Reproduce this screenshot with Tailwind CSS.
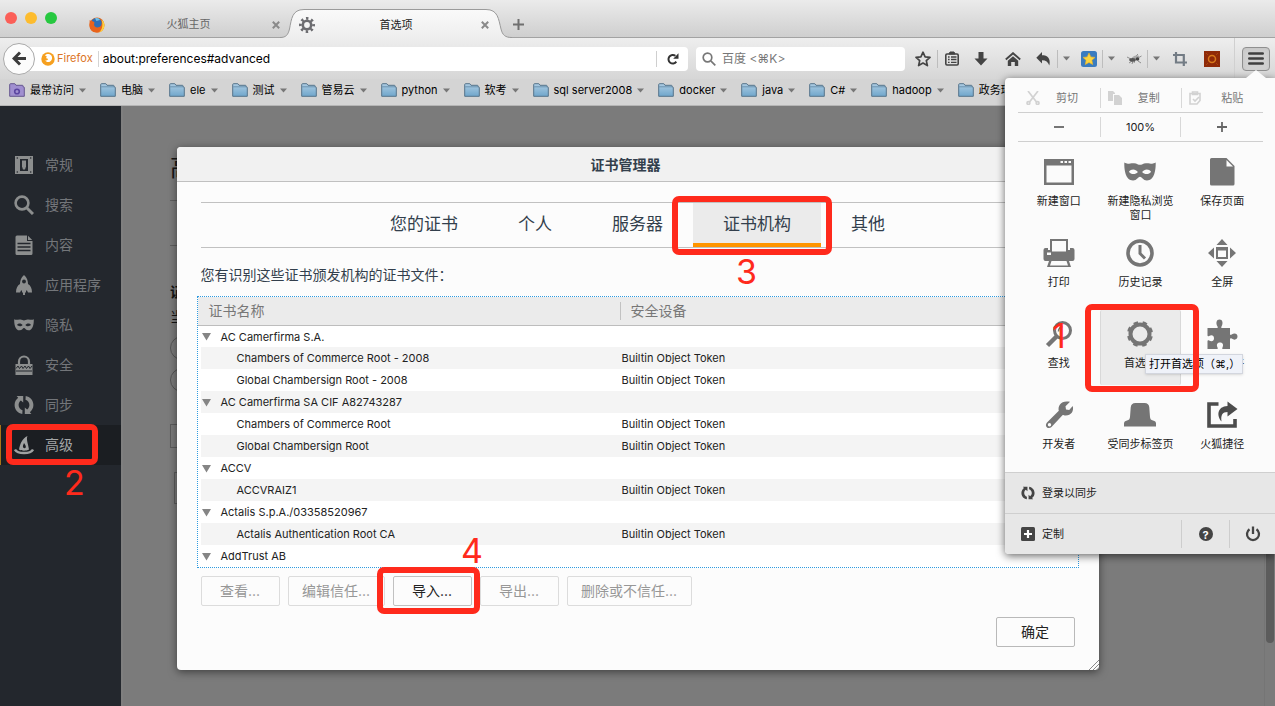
<!DOCTYPE html>
<html lang="zh-CN">
<head>
<meta charset="utf-8">
<title>首选项</title>
<script src="https://cdn.jsdelivr.net/npm/@tailwindcss/browser@4"></script>
</head>
<body class="relative flex h-screen flex-col overflow-hidden bg-[#7b7b7b] font-['Inter','Noto_Sans_CJK_SC',sans-serif] text-[11px] text-[#222]">

<svg class="absolute size-0" aria-hidden="true">
  <defs>
    <linearGradient id="fold" x1="0" y1="0" x2="0" y2="1"><stop offset="0" stop-color="#aecde4"/><stop offset="1" stop-color="#6fa6cb"/></linearGradient>
    <linearGradient id="tabfill" x1="0" y1="0" x2="0" y2="1"><stop offset="0" stop-color="#fafafa"/><stop offset="1" stop-color="#eeeeee"/></linearGradient>
  </defs>
  <symbol id="folder" viewBox="0 0 16 16"><path d="M.7 14.300V2.600q0-.9.9-.9h4.200l1.200 1.600h6.300q.8 0 .8.800v.8h.5q.7 0 .7.700v8.700z" fill="url(#fold)" stroke="#56738a" stroke-width="1"/><path d="M1.200 4.800h12.900" stroke="#5f86a3" stroke-width=".8"/></symbol>
  <symbol id="caret" viewBox="0 0 7 5"><path d="M0 .5h7L3.500 4.500z" fill="currentColor"/></symbol>
  <symbol id="mask" viewBox="0 0 30 20"><path fill="currentColor" fill-rule="evenodd" d="M.3 1.200C3.500 3.300 5.500 1.500 9.500 1.800c2.600.2 4 1.500 5.500 1.500s2.900-1.300 5.500-1.500c4-.3 6 1.500 9.200-.6C29.900 8 28.600 18 21.500 18c-3.600 0-4.800-3.500-6.500-3.500S12.100 18 8.500 18C1.400 18 .1 8 .3 1.200zM4.600 9.800c1.700 2.700 6.200 3 8.400.3-2-3.100-6.300-3.400-8.400-.3zm20.800 0c-2.100-3.100-6.400-2.800-8.400.3 2.200 2.700 6.700 2.400 8.400-.3z"/></symbol>
  <symbol id="sync" viewBox="0 0 20 20"><path fill="currentColor" d="M8.300 19C3.800 18.300.6 14.500.6 10c0-3 1.400-5.600 3.600-7.200L2.600 1h6.600v6.600L6.900 5.500C5.500 6.500 4.600 8.100 4.600 10c0 2.500 1.600 4.600 3.900 5.300zM11.700 1c4.500.7 7.700 4.500 7.700 9 0 3-1.400 5.600-3.600 7.200l1.600 1.800h-6.600v-6.600l2.300 2.100c1.400-1 2.300-2.600 2.300-4.500 0-2.500-1.600-4.600-3.900-5.300z"/></symbol>
</svg>

<!-- Tab strip -->
<header class="flex h-[38px] shrink-0 items-stretch border-b border-[#a3a3a3] bg-linear-to-b from-[#ebebeb] to-[#cfcfcf]">
  <div class="flex w-[84px] shrink-0 gap-2 pt-3 pl-[5px]">
    <button aria-label="关闭窗口" class="size-3 rounded-full bg-[#fb5f58]"></button>
    <button aria-label="最小化" class="size-3 rounded-full bg-[#fdbc2e]"></button>
    <button aria-label="全屏" class="size-3 rounded-full bg-[#27c840]"></button>
  </div>
  <div class="flex w-[200px] shrink-0 items-center pt-3 pl-[5px] text-[#666]">
    <svg class="size-4 shrink-0" viewBox="0 0 16 16"><circle cx="8" cy="8" r="7.500" fill="#e2661a"/><circle cx="7.400" cy="6.400" r="5.400" fill="#2f6fb5"/><path d="M6 1.300c2.500-.8 4.500.2 5 1.700-1.500 0-2.500 1-3.500 1z" fill="#6fc0e8"/><path d="M.7 3C1.500 4 3 3.700 4 4.500 5.500 4.700 6 6 5 7c0 3 2.500 4 5.500 3 2-1 2.600-3 2.300-5 2 1.500 2.700 3.500 2 6-1 3-3.800 4.500-7 4.500C3 15.500 0 12 .5 7z" fill="#e8631b"/><path d="M12.500 2.500c2.800 2 3.500 5 2.500 8.500-.8 2.300-2.600 4-5 4.400 3-2.500 4.500-7 2.500-12.900z" fill="#ffd23c"/></svg>
    <button class="flex-1 pl-1 text-center">火狐主页</button>
    <button aria-label="关闭标签页" class="grid size-4 place-items-center"><svg class="size-2" viewBox="0 0 8 8" stroke="#8a8a8a" stroke-width="2"><path d="M.8.8l6.400 6.400M7.200.8L.8 7.200"/></svg></button>
  </div>
  <div class="relative -mb-px -ml-1 flex w-[232px] shrink-0 items-center pt-3 pr-[19px] pl-[19px]">
    <svg class="absolute inset-x-0 top-[9px] h-[29px] w-full" viewBox="0 0 232 29" fill="none"><path d="M0 28.500C6 28.500 8 26 9.500 20C11.500 10 12 .5 24 .5H206C218 .5 218.500 10 221 20C222.500 26 225 28.500 232 28.500V29H0z" fill="url(#tabfill)"/><path d="M0 28.500C6 28.500 8 26 9.500 20C11.500 10 12 .5 24 .5H206C218 .5 218.500 10 221 20C222.500 26 225 28.500 232 28.500" stroke="#9a9a9a"/></svg>
    <svg class="relative size-4 shrink-0" viewBox="0 0 16 16" fill="none" stroke="#6c6c70"><circle cx="8" cy="8" r="4.200" stroke-width="2.600"/><circle cx="8" cy="8" r="6.600" stroke-width="2.800" stroke-dasharray="2.400 2.784" stroke-dashoffset="1.200"/></svg>
    <button class="relative flex-1 text-center">首选项</button>
    <button aria-label="关闭标签页" class="relative grid size-4 place-items-center"><svg class="size-2" viewBox="0 0 8 8" stroke="#8a8a8a" stroke-width="2"><path d="M.8.8l6.400 6.400M7.200.8L.8 7.200"/></svg></button>
  </div>
  <button aria-label="新建标签页" class="mt-3 grid w-3 place-items-center"><svg class="size-[11px]" viewBox="0 0 11 11" stroke="#6f6f6f" stroke-width="2"><path d="M5.500 0v11M0 5.500h11"/></svg></button>
</header>

<!-- Navigation toolbar -->
<div class="flex h-[41px] shrink-0 items-center bg-linear-to-b from-[#eeeeee] to-[#d6d6d6] pl-[3px]">
  <button aria-label="后退" class="z-10 grid size-8 shrink-0 place-items-center rounded-full border border-[#a9a9a9] bg-[#fcfcfc]"><svg class="size-[15px]" viewBox="0 0 15 15" fill="none" stroke="#3c3c3c" stroke-width="3"><path d="M8 1.500l-6 6 6 6M2.500 7.500H14"/></svg></button>
  <div class="-ml-4 flex h-6 min-w-0 flex-1 items-center rounded-r-sm bg-white pl-[22px]">
    <svg class="size-[14px] shrink-0" viewBox="0 0 14 14"><circle cx="7" cy="7" r="6.700" fill="#f6a01f"/><path d="M4 3.500c1.500-2 5-2 6.500.3 1.300 2.300.3 5-1.700 6-2.300.8-4-.3-4.600-1.600 1.300.5 2.500 0 3-1.200C5.500 7 4.500 5.500 6 4.600z" fill="#fff"/></svg>
    <span class="ml-[2px] text-[11px] text-[#dc741f]">Firefox</span>
    <span class="ml-[5px] h-4 w-px bg-[#d4d4d4]"></span>
    <input aria-label="地址" value="about:preferences#advanced" class="ml-1 h-6 min-w-0 flex-1 bg-transparent text-[12px] text-black outline-none">
    <button aria-label="重新载入" class="grid h-4 w-8 place-items-center border-l border-[#cfcfcf]"><svg class="size-3" viewBox="0 0 12 12"><path d="M9.300 8.700A4.300 4.300 0 1 1 8.400 2.800" fill="none" stroke="#333" stroke-width="2"/><path d="M11.500.3v5.500H6.200z" fill="#333"/></svg></button>
  </div>
  <div class="ml-2 flex h-6 w-[209px] shrink-0 items-center rounded-sm bg-white pl-[6px]">
    <svg class="size-[14px] shrink-0" viewBox="0 0 14 14" fill="none" stroke="#777" stroke-width="1.700"><circle cx="5.500" cy="5.500" r="4.300"/><path d="M8.800 8.800l4.500 4.500"/></svg>
    <input aria-label="搜索" placeholder="百度 &lt;⌘K&gt;" class="ml-[6px] h-6 min-w-0 flex-1 bg-transparent text-[12px] outline-none placeholder:text-[#777]">
  </div>
  <div class="ml-1 flex h-[18px] shrink-0 items-stretch text-[#444]">
    <button aria-label="收藏" class="grid w-[29px] place-items-center border-r border-[#bdbdbd]"><svg class="size-4" viewBox="0 0 16 16"><path d="M8 1.200l2.100 4.600 4.900.5-3.700 3.300 1.100 5L8 12.100l-4.400 2.500 1.100-5L1 6.300l4.900-.5z" fill="none" stroke="#444" stroke-width="1.700" stroke-linejoin="round"/></svg></button>
    <button aria-label="书签" class="grid w-[27px] place-items-center"><svg class="h-[15px] w-[14px]" viewBox="0 0 14 15" fill="none" stroke="#444"><rect x=".8" y="3" width="12.400" height="11" rx="1.200" stroke-width="1.600"/><path d="M4 3l1-2h4l1 2z" fill="#444"/><path d="M3 6h1.600M6 6h5.500M3 8.500h1.600M6 8.500h5.500M3 11.300h1.600M6 11.300h5.500" stroke-width="1.300"/></svg></button>
    <button aria-label="下载" class="grid w-8 place-items-center"><svg class="size-[14px]" viewBox="0 0 14 14"><path d="M4.500 0h5v6.500h4L7 13.500.5 6.500h4z" fill="#444"/></svg></button>
    <button aria-label="主页" class="grid w-8 place-items-center"><svg class="h-[14px] w-4" viewBox="0 0 16 14"><path d="M.8 7.500L8 1.200l7.200 6.300" fill="none" stroke="#444" stroke-width="1.900"/><path d="M2.800 8.700L8 4.200l5.200 4.500V14H9.800v-4H6.200v4H2.800z" fill="#444"/></svg></button>
    <button aria-label="撤销" class="grid w-[29px] place-items-center border-r border-[#bdbdbd]"><svg class="size-[14px]" viewBox="0 0 14 14"><path d="M6 0v3.300c5 0 9 2.500 7.300 10.200C12 10 10 8.200 6 8.200v3.300L.3 5.700z" fill="#444"/></svg></button>
    <button aria-label="更多" class="grid w-[17px] place-items-center text-[#777]"><svg class="h-[5px] w-[7px]"><use href="#caret"/></svg></button>
    <button aria-label="星标" class="grid w-7 place-items-center border-r border-[#bdbdbd]"><svg class="size-4" viewBox="0 0 16 16"><rect width="16" height="16" rx="2.500" fill="#3a7cc0"/><path d="M8 2l1.800 3.900 4.200.5-3.100 2.900.8 4.200L8 11.400l-3.700 2.100.8-4.200L2 6.400l4.200-.5z" fill="#fcd53f" stroke="#f3b51e" stroke-width=".6"/></svg></button>
    <button aria-label="更多" class="grid w-[17px] place-items-center text-[#777]"><svg class="h-[5px] w-[7px]"><use href="#caret"/></svg></button>
    <button aria-label="Firebug" class="grid w-7 place-items-center border-r border-[#bdbdbd]"><svg class="size-4" viewBox="0 0 16 16"><g stroke="#777" stroke-width=".8" fill="none"><path d="M1 6l4 2M3 12l3-2M8 12l1-3M12 10l3 2M9 6l3-3M6 13l1-3M12 7l3.500-2"/></g><ellipse cx="9.500" cy="6.500" rx="3.800" ry="1.900" transform="rotate(-20 9.500 6.500)" fill="#aaa"/><ellipse cx="6.500" cy="8.800" rx="3.300" ry="1.900" fill="#555"/><circle cx="11.500" cy="8" r="1.800" fill="#444"/></svg></button>
    <button aria-label="更多" class="grid w-[17px] place-items-center text-[#777]"><svg class="h-[5px] w-[7px]"><use href="#caret"/></svg></button>
    <button aria-label="截图" class="grid w-[30px] place-items-center"><svg class="size-[14px]" viewBox="0 0 14 14" fill="none" stroke="#737c85" stroke-width="2.200"><path d="M3 0v10.500h11M0 3h10.800v11"/></svg></button>
    <button aria-label="附加组件" class="grid w-[34px] place-items-center"><svg class="size-4" viewBox="0 0 16 16"><rect width="16" height="16" fill="#8f2a08"/><circle cx="8" cy="8" r="3.500" fill="none" stroke="#d9791b" stroke-width="1.500"/><path d="M2 2l2 2M14 2l-2 2M2 14l2-2M14 14l-2-2" stroke="#a8430d"/></svg></button>
  </div>
  <div class="ml-[5px] flex h-full shrink-0 items-center border-l border-[#d0d0d0] pr-[5px] pl-[7px]">
    <button aria-label="打开菜单" class="grid h-6 w-7 place-items-center rounded-sm border border-[#8f8f8f] bg-[#d0d0d0] shadow-inner"><svg class="h-[13px] w-4" viewBox="0 0 16 13" stroke="#3f3f3f" stroke-width="2.600" stroke-linecap="round"><path d="M1.300 1.500h13.400M1.300 6.500h13.400M1.300 11.500h13.400"/></svg></button>
  </div>
</div>

<!-- Bookmarks toolbar -->
<nav aria-label="书签工具栏" class="flex h-[27px] shrink-0 items-center gap-[14px] overflow-hidden border-b border-[#b5b5b5] bg-[#d4d4d4] pb-[4px] pl-[9px] text-[11px] whitespace-nowrap text-black">
  <button class="flex items-center gap-[5px]"><svg class="size-4" viewBox="0 0 16 16"><path d="M.7 14.300V2.600q0-.9.9-.9h4.200l1.200 1.600h6.300q.8 0 .8.800v.8h.5q.7 0 .7.700v8.700z" fill="#a08fd0" stroke="#65578f"/><circle cx="8" cy="9.500" r="2.300" fill="none" stroke="#5b45a0" stroke-width="1.600"/></svg>最常访问<svg class="h-[5px] w-[7px] text-[#777]"><use href="#caret"/></svg></button>
  <button class="flex items-center gap-[5px]"><svg class="size-4"><use href="#folder"/></svg>电脑<svg class="h-[5px] w-[7px] text-[#777]"><use href="#caret"/></svg></button>
  <button class="flex items-center gap-[5px]"><svg class="size-4"><use href="#folder"/></svg>ele<svg class="h-[5px] w-[7px] text-[#777]"><use href="#caret"/></svg></button>
  <button class="flex items-center gap-[5px]"><svg class="size-4"><use href="#folder"/></svg>测试<svg class="h-[5px] w-[7px] text-[#777]"><use href="#caret"/></svg></button>
  <button class="flex items-center gap-[5px]"><svg class="size-4"><use href="#folder"/></svg>管易云<svg class="h-[5px] w-[7px] text-[#777]"><use href="#caret"/></svg></button>
  <button class="flex items-center gap-[5px]"><svg class="size-4"><use href="#folder"/></svg>python<svg class="h-[5px] w-[7px] text-[#777]"><use href="#caret"/></svg></button>
  <button class="flex items-center gap-[5px]"><svg class="size-4"><use href="#folder"/></svg>软考<svg class="h-[5px] w-[7px] text-[#777]"><use href="#caret"/></svg></button>
  <button class="flex items-center gap-[5px]"><svg class="size-4"><use href="#folder"/></svg>sql server2008<svg class="h-[5px] w-[7px] text-[#777]"><use href="#caret"/></svg></button>
  <button class="flex items-center gap-[5px]"><svg class="size-4"><use href="#folder"/></svg>docker<svg class="h-[5px] w-[7px] text-[#777]"><use href="#caret"/></svg></button>
  <button class="flex items-center gap-[5px]"><svg class="size-4"><use href="#folder"/></svg>java<svg class="h-[5px] w-[7px] text-[#777]"><use href="#caret"/></svg></button>
  <button class="flex items-center gap-[5px]"><svg class="size-4"><use href="#folder"/></svg>C#<svg class="h-[5px] w-[7px] text-[#777]"><use href="#caret"/></svg></button>
  <button class="flex items-center gap-[5px]"><svg class="size-4"><use href="#folder"/></svg>hadoop<svg class="h-[5px] w-[7px] text-[#777]"><use href="#caret"/></svg></button>
  <button class="flex items-center gap-[5px]"><svg class="size-4"><use href="#folder"/></svg>政务环</button>
</nav>

<!-- Page content -->
<div class="relative flex min-h-0 flex-1">
  <aside class="w-[121px] shrink-0 bg-[#23272d] pt-[39px] text-[14px] leading-[18px] text-[#73767a]">
    <nav aria-label="首选项分类">
      <a href="#general" class="flex h-10 items-center gap-[11px] pl-[14px]"><svg class="size-5 text-[#8c8e8e]" viewBox="0 0 20 20"><path fill="currentColor" fill-rule="evenodd" d="M1 1h18v18H1zM6 4v12h8V4zM2.500 3a.8.8 0 1 0 1.600 0 .8.8 0 1 0-1.600 0zm13.400 0a.8.8 0 1 0 1.600 0 .8.8 0 1 0-1.600 0zM2.500 17a.8.8 0 1 0 1.600 0 .8.8 0 1 0-1.600 0zm13.400 0a.8.8 0 1 0 1.600 0 .8.8 0 1 0-1.600 0z"/><path fill="currentColor" d="M8 5.500h4v6l-1 3H9l-1-3z"/></svg>常规</a>
      <a href="#search" class="flex h-10 items-center gap-[11px] pl-[14px]"><svg class="size-5 text-[#8c8e8e]" viewBox="0 0 20 20" fill="none" stroke="currentColor"><circle cx="8" cy="8" r="6.400" stroke-width="2.600"/><path d="M12.700 12.700l6.300 6.300" stroke-width="3"/></svg>搜索</a>
      <a href="#content" class="flex h-10 items-center gap-[11px] pl-[14px]"><svg class="size-5 text-[#8c8e8e]" viewBox="0 0 20 20"><path fill="currentColor" d="M3 .5h10V6h5.500v12.500a1.500 1.500 0 0 1-1.500 1.500H3a1.500 1.500 0 0 1-1.500-1.500V2A1.500 1.500 0 0 1 3 .5zM14 .8L18.200 5H14z"/><path d="M3.500 8.500h13M3.500 12h13M3.500 15.500h13" stroke="#23272d" stroke-width="1.500"/></svg>内容</a>
      <a href="#applications" class="flex h-10 items-center gap-[11px] pl-[14px]"><svg class="size-5 text-[#8c8e8e]" viewBox="0 0 20 20"><path fill="currentColor" d="M10 0c3 2.500 4 6 4 9 2.500 1.500 4 4 4 8.500h-4l-1-2h-1v2h-1V20H9v-2.500H8v-2H7l-1 2H2C2 13 3.500 10.500 6 9c0-3 1-6.500 4-9z"/><circle cx="10" cy="6.500" r="1.900" fill="#23272d"/></svg>应用程序</a>
      <a href="#privacy" class="flex h-10 items-center gap-[11px] pl-[14px]"><svg class="size-5 text-[#8c8e8e]"><use href="#mask"/></svg>隐私</a>
      <a href="#security" class="flex h-10 items-center gap-[11px] pl-[14px]"><svg class="size-5 text-[#8c8e8e]" viewBox="0 0 20 20"><path d="M5 10V6.500a5 5 0 0 1 10 0V10" fill="none" stroke="currentColor" stroke-width="2.200"/><path fill="currentColor" d="M1.500 9h17v11h-17z"/><path d="M2 13.500l2-2.500 1.500 2.500 2-2.500L9 13.500l2-2.500 1.500 2.500 2-2.500 1.500 2.500 2-2.500M2 16h16" stroke="#23272d" fill="none"/></svg>安全</a>
      <a href="#sync" class="flex h-10 items-center gap-[11px] pl-[14px]"><svg class="size-5 text-[#8c8e8e]"><use href="#sync"/></svg>同步</a>
      <a href="#advanced" aria-current="page" class="flex h-10 items-center gap-[11px] border-l border-[#a8741a] bg-[#1b1e22] pl-[13px] text-[#a5a7a8]"><svg class="size-5 text-[#a0a2a2]" viewBox="0 0 20 20"><path fill="currentColor" fill-rule="evenodd" d="M5 14.500C6 9 8 3.500 13.500 1 12 4 14 8 15 14.500c-2.500 1.600-7.500 1.600-10 0zM10 8c-.8 2-1.500 3.300-.8 4.600.8 1 2.300.8 2.600-.4.2-1.200-.6-2.500-1.800-4.200z"/><path d="M1 14.500c2.500 4.700 15.500 4.700 18 0" fill="none" stroke="currentColor" stroke-width="2.400"/></svg>高级</a>
    </nav>
  </aside>

  <main class="flex min-w-0 flex-1 flex-col overflow-hidden border-l-2 border-[#7f7f7f] pl-[47px] text-[14px] text-[#151515]">
    <h1 class="mt-11 h-[51px] border-b border-[#5f5f5f] text-[24px] leading-9">高</h1>
    <div class="h-[45px] border-b border-[#5f5f5f]"></div>
    <p class="mt-9 h-[25px] leading-5 font-bold">证</p>
    <p class="h-[25px] leading-5">当</p>
    <div class="mt-1 flex flex-col gap-2">
      <span class="size-6 rounded-full border border-[#555]"></span>
      <span class="size-6 rounded-full border border-[#555]"></span>
    </div>
    <div class="mt-8 h-6 w-20 border border-[#5c5c5c]"></div>
    <div class="mt-6 ml-1 h-8 w-20 border border-[#5c5c5c]"></div>
  </main>
  <div class="w-[11px] shrink-0 border-l border-[#757575] px-px"><div class="h-[537px] rounded-full bg-[#5c5c5c]"></div></div>

  <!-- Certificate manager dialog -->
  <div class="absolute inset-0 flex items-start justify-center pt-[41px]">
    <section role="dialog" aria-labelledby="dlg" class="flex w-[922px] flex-col rounded-sm bg-[#fcfcfc] pb-[23px] text-[14px] text-[#333f4c] shadow-[0_2px_8px_rgba(0,0,0,0.5)]">
      <h2 id="dlg" class="h-[35px] rounded-t-sm border-b border-[#c0c0c0] bg-[#f1f1f1] pr-6 text-center leading-9 font-bold">证书管理器</h2>
      <div class="mx-6 mt-5 flex h-[46px] justify-center border-y border-[#c1c1c1] text-[17px]" role="tablist">
        <button role="tab" class="px-[30px]">您的证书</button>
        <button role="tab" class="px-[30px]">个人</button>
        <button role="tab" class="px-[30px]">服务器</button>
        <button role="tab" aria-selected="true" class="border-b-4 border-[#ff9500] bg-[#ebebeb] px-[30px] pt-1">证书机构</button>
        <button role="tab" class="px-[30px]">其他</button>
      </div>
      <p class="mx-6 mt-[17px] h-[31px] leading-5">您有识别这些证书颁发机构的证书文件：</p>
      <div class="mx-5 border border-dotted border-[#2f9be0] bg-white">
        <table class="w-full table-fixed border-collapse text-left text-[11px] text-[#222] [&_tbody_td]:pt-px">
          <colgroup><col class="w-[3px]"><col class="w-[420px]"><col><col class="w-[3px]"></colgroup>
          <thead class="text-[14px] text-[#777]"><tr class="h-7 border-b border-[#bdbdbd] bg-[#ebebeb]"><th></th><th class="p-0 pl-2 font-normal"><div class="flex h-[18px] items-center border-r border-[#c2c2c2]">证书名称</div></th><th class="p-0 pl-[10px] font-normal">安全设备</th><th></th></tr></thead>
          <tbody>
            <tr class="h-[22px]"><td></td><td class="p-0"><span class="flex items-center gap-[10px] pl-px"><svg class="size-[9px]" viewBox="0 0 9 9"><path d="M0 1h9L4.500 8.500z" fill="#858585"/></svg>AC Camerfirma S.A.</span></td><td></td><td></td></tr>
            <tr class="h-[22px]"><td></td><td class="bg-[#f4f4f4] p-0 pl-9">Chambers of Commerce Root - 2008</td><td class="bg-[#f4f4f4] p-0 pl-px">Builtin Object Token</td><td></td></tr>
            <tr class="h-[22px]"><td></td><td class="p-0 pl-9">Global Chambersign Root - 2008</td><td class="p-0 pl-px">Builtin Object Token</td><td></td></tr>
            <tr class="h-[22px]"><td></td><td class="bg-[#f4f4f4] p-0"><span class="flex items-center gap-[10px] pl-px"><svg class="size-[9px]" viewBox="0 0 9 9"><path d="M0 1h9L4.500 8.500z" fill="#858585"/></svg>AC Camerfirma SA CIF A82743287</span></td><td class="bg-[#f4f4f4]"></td><td></td></tr>
            <tr class="h-[22px]"><td></td><td class="p-0 pl-9">Chambers of Commerce Root</td><td class="p-0 pl-px">Builtin Object Token</td><td></td></tr>
            <tr class="h-[22px]"><td></td><td class="bg-[#f4f4f4] p-0 pl-9">Global Chambersign Root</td><td class="bg-[#f4f4f4] p-0 pl-px">Builtin Object Token</td><td></td></tr>
            <tr class="h-[22px]"><td></td><td class="p-0"><span class="flex items-center gap-[10px] pl-px"><svg class="size-[9px]" viewBox="0 0 9 9"><path d="M0 1h9L4.500 8.500z" fill="#858585"/></svg>ACCV</span></td><td></td><td></td></tr>
            <tr class="h-[22px]"><td></td><td class="bg-[#f4f4f4] p-0 pl-9">ACCVRAIZ1</td><td class="bg-[#f4f4f4] p-0 pl-px">Builtin Object Token</td><td></td></tr>
            <tr class="h-[22px]"><td></td><td class="p-0"><span class="flex items-center gap-[10px] pl-px"><svg class="size-[9px]" viewBox="0 0 9 9"><path d="M0 1h9L4.500 8.500z" fill="#858585"/></svg>Actalis S.p.A./03358520967</span></td><td></td><td></td></tr>
            <tr class="h-[22px]"><td></td><td class="bg-[#f4f4f4] p-0 pl-9">Actalis Authentication Root CA</td><td class="bg-[#f4f4f4] p-0 pl-px">Builtin Object Token</td><td></td></tr>
            <tr class="h-[22px]"><td></td><td class="p-0"><span class="flex items-center gap-[10px] pl-px"><svg class="size-[9px]" viewBox="0 0 9 9"><path d="M0 1h9L4.500 8.500z" fill="#858585"/></svg>AddTrust AB</span></td><td></td><td></td></tr>
          </tbody>
        </table>
      </div>
      <div class="mx-6 mt-2 flex gap-2 leading-[18px] text-[#979797]">
        <button disabled class="h-[30px] w-[79px] rounded-xs border border-[#dcdcdc]">查看...</button>
        <button disabled class="h-[30px] w-[97px] rounded-xs border border-[#dcdcdc]">编辑信任...</button>
        <button class="h-[30px] w-[79px] rounded-xs border border-[#c1c1c1] text-[#222]">导入...</button>
        <button disabled class="h-[30px] w-[79px] rounded-xs border border-[#dcdcdc]">导出...</button>
        <button disabled class="h-[30px] w-[125px] rounded-xs border border-[#dcdcdc]">删除或不信任...</button>
      </div>
      <button class="mt-[11px] mr-6 h-[30px] w-[79px] self-end rounded-xs border border-[#b9b9b9] leading-[18px] text-[#222]">确定</button>
      <div class="-mt-[10px] flex h-[10px] translate-y-[23px] justify-end"><svg class="size-[10px]" viewBox="0 0 10 10" stroke="#888"><path d="M0 10L10 0M4 10l6-6M7.500 10L10 7.500"/></svg></div>
    </section>
  </div>
</div>

<!-- Application menu -->
<div class="absolute top-[78px] right-0 w-[270px] rounded-l-[4px] bg-[#fbfbfb] pt-[6px] text-[11px] text-[#222] shadow-[0_2px_9px_rgba(0,0,0,0.6)]">
  <svg class="absolute -top-2 right-[9px] h-2 w-5" viewBox="0 0 20 8"><path d="M0 8L10 0l10 8z" fill="#fbfbfb"/></svg>
  <div class="mr-3 ml-[13px] grid h-[29px] grid-cols-3 items-center border-b border-[#cfcfcf] text-[#777]">
    <button class="flex h-5 items-center gap-4 pl-2"><svg class="size-[14px]" viewBox="0 0 14 14" fill="none" stroke="#d2d2d2" stroke-width="1.700"><path d="M2 0l8.500 11M12 0L3.500 11"/><circle cx="2.400" cy="12" r="1.400"/><circle cx="11.600" cy="12" r="1.400"/></svg>剪切</button>
    <button class="flex h-5 items-center gap-4 border-l border-[#d8d8d8] pl-[7px]"><svg class="size-[14px]" viewBox="0 0 14 14" fill="#d2d2d2"><path d="M0 0h5l2 2v1H5v7H0zM6 4h5l3 3v7H6z"/></svg>复制</button>
    <button class="flex h-5 items-center gap-5 border-l border-[#d8d8d8] pl-[7px]"><svg class="h-[14px] w-3" viewBox="0 0 12 14" fill="none" stroke="#d2d2d2" stroke-width="1.600"><path d="M1 2.500h10v7l-3 3.500H1z"/><path d="M3.500 1h5v2.500h-5zM4 8l2 2 4-4"/></svg>粘贴</button>
  </div>
  <div class="mr-3 ml-[13px] grid h-[29px] grid-cols-3 items-center border-b border-[#cfcfcf]">
    <button aria-label="缩小" class="grid h-5 place-items-center"><svg class="size-[10px]" viewBox="0 0 10 10" stroke="#666" stroke-width="1.800"><path d="M0 5h10"/></svg></button>
    <button class="h-5 border-x border-[#d8d8d8]">100%</button>
    <button aria-label="放大" class="grid h-5 place-items-center"><svg class="size-[10px]" viewBox="0 0 10 10" stroke="#666" stroke-width="1.800"><path d="M0 5h10M5 0v10"/></svg></button>
  </div>
  <div class="mt-[6px] mr-3 ml-[13px] grid h-[324px] grid-cols-3 grid-rows-4 leading-[14px] text-[#222]">
    <button class="flex flex-col items-center gap-[6px] pt-2"><svg class="size-8 text-[#757575]" viewBox="0 0 32 32"><path fill="currentColor" fill-rule="evenodd" d="M1 3h30v26H1zM3.500 9.500v17h25v-17zM17.500 5v2h2.500V5zm4 0v2H24V5zm4 0v2H28V5z"/></svg>新建窗口</button>
    <button class="flex flex-col items-center gap-[6px] pt-2"><svg class="size-8 text-[#757575]"><use href="#mask"/></svg><span class="w-[68px]">新建隐私浏览窗口</span></button>
    <button class="flex flex-col items-center gap-[6px] pt-2"><svg class="size-8 text-[#757575]" viewBox="0 0 32 32"><path fill="currentColor" d="M5.500 2H20.500l8 8v18a1.500 1.500 0 0 1-1.500 1.500H5.500A1.500 1.500 0 0 1 4 28V3.500A1.500 1.500 0 0 1 5.500 2z"/><path d="M20.500 4v6.500H27z" fill="#fbfbfb"/></svg>保存页面</button>

    <button class="flex flex-col items-center gap-[6px] pt-2"><svg class="size-8 text-[#757575]" viewBox="0 0 32 32"><path fill="currentColor" fill-rule="evenodd" d="M7 2h18v11h2v-2h2.500q2 0 2 2v9q0 2-2 2H26l2 6H4l2-6H2.500q-2 0-2-2v-9q0-2 2-2H5v2h2zM9 4v10.500h14V4zM8.500 24L7 28.500h18L23.500 24zM4 15.500V18h4v-2.500z"/></svg>打印</button>
    <button class="flex flex-col items-center gap-[6px] pt-2"><svg class="size-8 text-[#757575]" viewBox="0 0 32 32" fill="none" stroke="currentColor"><circle cx="16" cy="16" r="12" stroke-width="3.600"/><path d="M16 8v8.500l5 5" stroke-width="3"/></svg>历史记录</button>
    <button class="flex flex-col items-center gap-[6px] pt-2"><svg class="size-8 text-[#757575]" viewBox="0 0 32 32"><path fill="currentColor" fill-rule="evenodd" d="M16 2l5.500 6h-11zM16 30l5.500-6h-11zM2 16l6-5.500v11zM30 16l-6-5.500v11zM10 10h12v12H10zM12 13.500V20h8v-6.500z"/></svg>全屏</button>

    <button class="flex flex-col items-center gap-[6px] pt-2"><svg class="size-8 text-[#757575]" viewBox="0 0 32 32" fill="none" stroke="currentColor"><circle cx="19.500" cy="12.500" r="8" stroke-width="3"/><path d="M13.500 18.500L4.500 27.500" stroke-width="4.500"/><path d="M15.500 13.500a4.500 4.500 0 0 1 4-4.800" stroke-width="1.500"/></svg>查找</button>
    <button class="mb-[6px] flex flex-col items-center gap-[6px] rounded-xs border-x border-[#d8d8d8] bg-[#ebebeb] pt-2"><svg class="size-8 text-[#757575]" viewBox="0 0 32 32" fill="none" stroke="currentColor"><circle cx="16" cy="16" r="9.500" stroke-width="4"/><circle cx="16" cy="16" r="11.500" stroke-width="3" stroke-dasharray="4.400 4.632" stroke-dashoffset="-2.300"/></svg>首选项</button>
    <button class="flex flex-col items-center gap-[6px] pt-2"><svg class="size-8 text-[#757575]" viewBox="0 0 32 32"><path fill="currentColor" d="M1.500 10H11c.8 0 1-.8.5-1.600C9.500 5 10.500 1.500 13.500 1.500S17.500 5 15.500 8.400c-.5.8-.3 1.600.5 1.600h8v6c0 .8.8 1.200 1.600.6 2.900-2 5.900-1 5.900 2s-3 4-5.900 2c-.8-.6-1.600-.2-1.600.6V31h-7c-.8 0-1-.8-.5-1.600 1.500-3-.2-4.900-2.500-4.900s-4 1.900-2.500 4.900c.5.8.3 1.600-.5 1.600H1.500v-8c0-.8.8-1 1.600-.5 2.900 1.500 4.900.2 4.900-2.300s-2-3.800-4.900-2.300c-.8.5-1.600.3-1.600-.5z"/></svg>附加组件</button>

    <button class="flex flex-col items-center gap-[6px] pt-2"><svg class="size-8 text-[#757575]" viewBox="0 0 32 32"><path fill="currentColor" fill-rule="evenodd" d="M27 2.800L22.500 7.300l.5 3.200 3.200.5 3.500-4c1.500 5-1.600 9.500-7 9.500-1.500 0-2.500-.3-3-.5L8.500 28c-1.400 1.400-3.500 1.400-4.700.2-1.200-1.200-1.200-3.300.2-4.700l11.800-11.700C14.500 6.500 18.500.8 27 2.800zM6.500 24a1.700 1.700 0 1 0 0 3.400 1.700 1.700 0 0 0 0-3.400z"/></svg>开发者</button>
    <button class="flex flex-col items-center gap-[6px] pt-2"><svg class="size-8 text-[#757575]" viewBox="0 0 32 32"><path fill="currentColor" d="M11.500 4h9q4.500 0 4.800 4.500l.7 9.500q.2 3 3 3.500 3 .5 3 3v3H0v-3q0-2.500 3-3 2.800-.5 3-3.500l.7-9.500Q7 4 11.500 4z"/></svg>受同步标签页</button>
    <button class="flex flex-col items-center gap-[6px] pt-2"><svg class="size-8" viewBox="0 0 32 32"><path d="M12.500 5H3v22h26v-7" fill="none" stroke="#4c4c4c" stroke-width="3.600"/><path d="M21.500 2.500l10 7.500-10 7.500V13c-5 0-7 3-6 9.500-5-5.500-4.500-15 6-15.500z" fill="#4c4c4c"/></svg>火狐捷径</button>
  </div>
  <div class="overflow-hidden rounded-bl-[4px] bg-[#e7e7e7]">
    <button class="flex h-[41px] w-full items-center gap-[7px] border-t border-[#cfcfcf] pl-4"><svg class="size-[14px] text-[#444]"><use href="#sync"/></svg>登录以同步</button>
    <div class="flex h-[41px] items-center border-t border-[#cfcfcf]">
      <button class="flex flex-1 items-center gap-[7px] pl-4"><svg class="size-[14px]" viewBox="0 0 14 14"><rect width="14" height="14" rx="1.500" fill="#444"/><path d="M7 3v8M3 7h8" stroke="#fff" stroke-width="2.200"/></svg>定制</button>
      <button aria-label="帮助" class="grid h-7 w-12 place-items-center border-l border-[#cdcdcd]"><span class="grid size-[14px] place-items-center rounded-full bg-[#444] text-[11px] font-bold text-white">?</span></button>
      <button aria-label="退出" class="grid h-7 w-[46px] place-items-center border-l border-[#cdcdcd]"><svg class="size-4" viewBox="0 0 16 16" fill="none" stroke="#444" stroke-width="2.300"><path d="M4.500 3.200a6 6 0 1 0 7 0M8 .5V8"/></svg></button>
    </div>
  </div>
</div>
<div role="tooltip" class="absolute top-[354px] right-8 flex h-5 w-[98px] items-center overflow-hidden border border-[#d3d6de] bg-[#eff2f9] pl-[3px] whitespace-nowrap text-black shadow-sm">打开首选项（⌘,）</div>

<!-- Step markers -->
<div class="pointer-events-none text-[34px] leading-none text-[#ff2a1c]">
  <span class="absolute top-[304px] left-[1085px] h-[88px] w-[114px] rounded-[7px] border-[6px] border-[#ff2a1c]"></span>
  <span class="absolute top-[319px] left-[1052px]">1</span>
  <span class="absolute top-[424px] left-[6px] h-[41px] w-[92px] rounded-[7px] border-[6px] border-[#ff2a1c]"></span>
  <span class="absolute top-[466px] left-[64px]">2</span>
  <span class="absolute top-[196px] left-[672px] h-[59px] w-[160px] rounded-[7px] border-[6px] border-[#ff2a1c]"></span>
  <span class="absolute top-[255px] left-[736px]">3</span>
  <span class="absolute top-[567px] left-[377px] h-[47px] w-[103px] rounded-[7px] border-[6px] border-[#ff2a1c]"></span>
  <span class="absolute top-[534px] left-[461px]">4</span>
</div>
</body>
</html>
